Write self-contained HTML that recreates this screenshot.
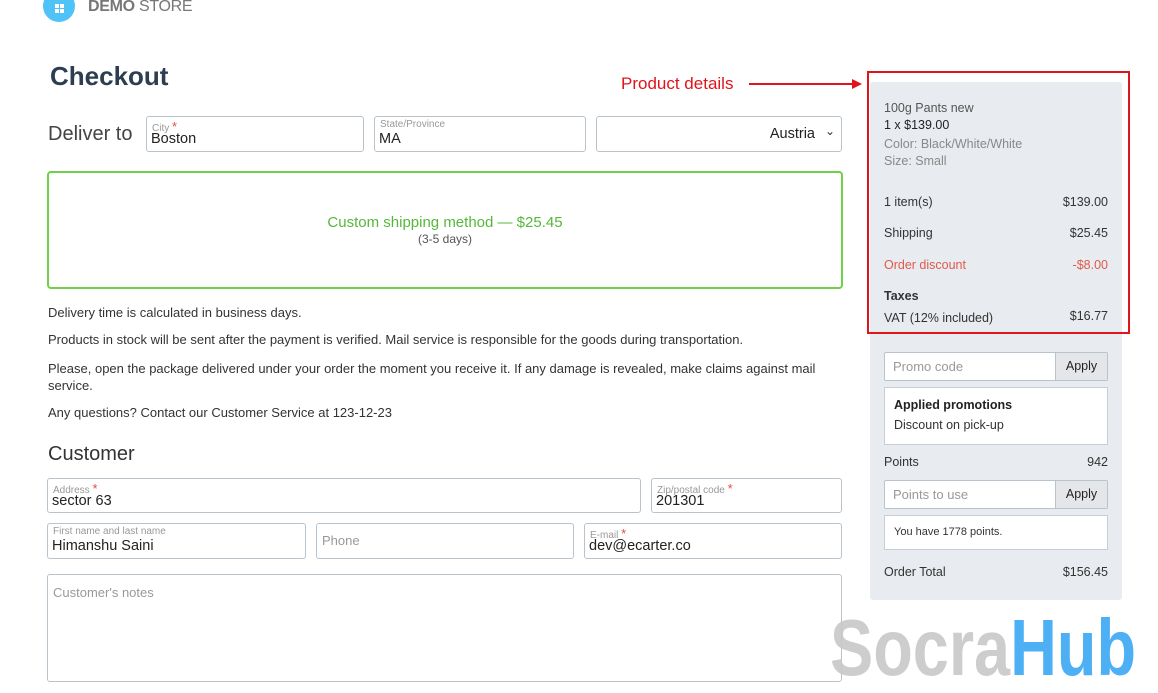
<!DOCTYPE html>
<html><head><meta charset="utf-8"><style>
*{box-sizing:border-box;margin:0;padding:0}
body{width:1158px;height:684px;overflow:hidden;background:#fff;font-family:"Liberation Sans",sans-serif;color:#333;position:relative}
.a{position:absolute}
.f{position:absolute;border:1px solid #b9c3cc;border-radius:3px;background:#fff}
.f .l{position:absolute;left:5px;top:2px;font-size:10px;color:#999}
.f .l b{color:#e74c3c;font-weight:normal;font-size:13px}
.f .v{position:absolute;left:4px;top:14px;font-size:14.5px;color:#222}
.f .p{position:absolute;left:5px;top:9px;font-size:13px;color:#999}
.s{font-size:13px;color:#333}
.r{right:14px;text-align:right}
</style></head><body>
<div class="a" style="left:43px;top:-10px;width:32px;height:32px;border-radius:50%;background:#4fc3f7"></div>
<div class="a" style="left:55px;top:4px;width:4px;height:4px;background:#fff;box-shadow:5px 0 #fff,0 5px #fff,5px 5px #fff"></div>
<div class="a" style="left:88px;top:-2px;font-size:16px;color:#777;letter-spacing:-.3px"><b>DEMO</b> STORE</div>
<div class="a" style="left:50px;top:61px;font-size:26px;font-weight:bold;color:#2c3e50">Checkout</div>
<div class="a" style="left:48px;top:123px;font-size:20px;color:#444">Deliver to</div>
<div class="f" style="left:146px;top:116px;width:218px;height:36px"><span class="l">City <b>*</b></span><span class="v">Boston</span></div>
<div class="f" style="left:374px;top:116px;width:212px;height:36px"><span class="l">State/Province</span><span class="v">MA</span></div>
<div class="f" style="left:596px;top:116px;width:246px;height:36px"><span class="a" style="right:26px;top:9px;font-size:14.5px;color:#222">Austria</span><span class="a" style="right:6px;top:7px;font-size:12px">&#8964;</span></div>
<div class="a" style="left:47px;top:171px;width:796px;height:118px;border:2px solid #6fd04c;border-radius:4px;text-align:center">
<div style="margin-top:41px;font-size:15px;color:#55b83a">Custom shipping method — $25.45</div>
<div style="font-size:12px;color:#555;margin-top:1px">(3-5 days)</div></div>
<div class="a s" style="left:48px;top:305px">Delivery time is calculated in business days.</div>
<div class="a s" style="left:48px;top:332px">Products in stock will be sent after the payment is verified. Mail service is responsible for the goods during transportation.</div>
<div class="a s" style="left:48px;top:360px;width:770px;line-height:17px">Please, open the package delivered under your order the moment you receive it. If any damage is revealed, make claims against mail service.</div>
<div class="a s" style="left:48px;top:405px">Any questions? Contact our Customer Service at 123-12-23</div>
<div class="a" style="left:48px;top:443px;font-size:20px;color:#333">Customer</div>
<div class="f" style="left:47px;top:478px;width:594px;height:35px"><span class="l">Address <b>*</b></span><span class="v">sector 63</span></div>
<div class="f" style="left:651px;top:478px;width:191px;height:35px"><span class="l">Zip/postal code <b>*</b></span><span class="v">201301</span></div>
<div class="f" style="left:47px;top:523px;width:259px;height:36px"><span class="l">First name and last name</span><span class="v">Himanshu Saini</span></div>
<div class="f" style="left:316px;top:523px;width:258px;height:36px"><span class="p">Phone</span></div>
<div class="f" style="left:584px;top:523px;width:258px;height:36px"><span class="l">E-mail <b>*</b></span><span class="v">dev@ecarter.co</span></div>
<div class="f" style="left:47px;top:574px;width:795px;height:108px"><span class="p" style="top:10px">Customer's notes</span></div>

<div class="a" style="left:870px;top:82px;width:252px;height:518px;background:#e8ebf0;border-radius:3px;font-size:12.5px">
<div class="a" style="left:14px;top:19px;color:#555">100g Pants new</div>
<div class="a" style="left:14px;top:36px;color:#222">1 x $139.00</div>
<div class="a" style="left:14px;top:55px;color:#888">Color: Black/White/White</div>
<div class="a" style="left:14px;top:72px;color:#888">Size: Small</div>
<div class="a" style="left:14px;top:113px">1 item(s)</div><div class="a r" style="top:113px">$139.00</div>
<div class="a" style="left:14px;top:144px">Shipping</div><div class="a r" style="top:144px">$25.45</div>
<div class="a" style="left:14px;top:176px;color:#e05a4a">Order discount</div><div class="a r" style="top:176px;color:#e05a4a">-$8.00</div>
<div class="a" style="left:14px;top:207px;font-weight:bold">Taxes</div>
<div class="a" style="left:14px;top:229px">VAT (12% included)</div><div class="a r" style="top:227px">$16.77</div>
<div class="a" style="left:14px;top:270px;width:224px;height:29px;background:#fff;border:1px solid #b9c3cc;border-radius:2px"><span class="a" style="left:8px;top:6px;color:#999;font-size:13px">Promo code</span><span class="a" style="right:0;top:0;width:52px;height:27px;background:#e4e6ea;border-left:1px solid #b9c3cc;text-align:center;line-height:27px;color:#222">Apply</span></div>
<div class="a" style="left:14px;top:305px;width:224px;height:58px;background:#fff;border:1px solid #c8ced6"><div class="a" style="left:9px;top:10px;font-weight:bold;color:#222">Applied promotions</div><div class="a" style="left:9px;top:30px;color:#333">Discount on pick-up</div></div>
<div class="a" style="left:14px;top:373px">Points</div><div class="a r" style="top:373px">942</div>
<div class="a" style="left:14px;top:398px;width:224px;height:29px;background:#fff;border:1px solid #b9c3cc;border-radius:2px"><span class="a" style="left:8px;top:6px;color:#999;font-size:13px">Points to use</span><span class="a" style="right:0;top:0;width:52px;height:27px;background:#e4e6ea;border-left:1px solid #b9c3cc;text-align:center;line-height:27px;color:#222">Apply</span></div>
<div class="a" style="left:14px;top:433px;width:224px;height:35px;background:#fff;border:1px solid #c8ced6"><span class="a" style="left:9px;top:10px;font-size:11px">You have 1778 points.</span></div>
<div class="a" style="left:14px;top:483px">Order Total</div><div class="a r" style="top:483px">$156.45</div>
</div>
<div class="a" style="left:867px;top:71px;width:263px;height:263px;border:2px solid #e0141b"></div>
<div class="a" style="left:621px;top:74px;font-size:17px;color:#e0141b">Product details</div>
<div class="a" style="left:749px;top:83px;width:105px;height:2px;background:#e0141b"></div>
<div class="a" style="left:852px;top:79px;border-left:10px solid #e0141b;border-top:5px solid transparent;border-bottom:5px solid transparent"></div>
<div class="a" style="left:830px;top:603px;font-size:80px;line-height:90px;font-weight:bold;white-space:nowrap;transform:scaleX(.81);transform-origin:0 0;opacity:.9"><span style="color:#c8c8c8">Socra</span><span style="color:#3aa8f5">Hub</span></div>
</body></html>
